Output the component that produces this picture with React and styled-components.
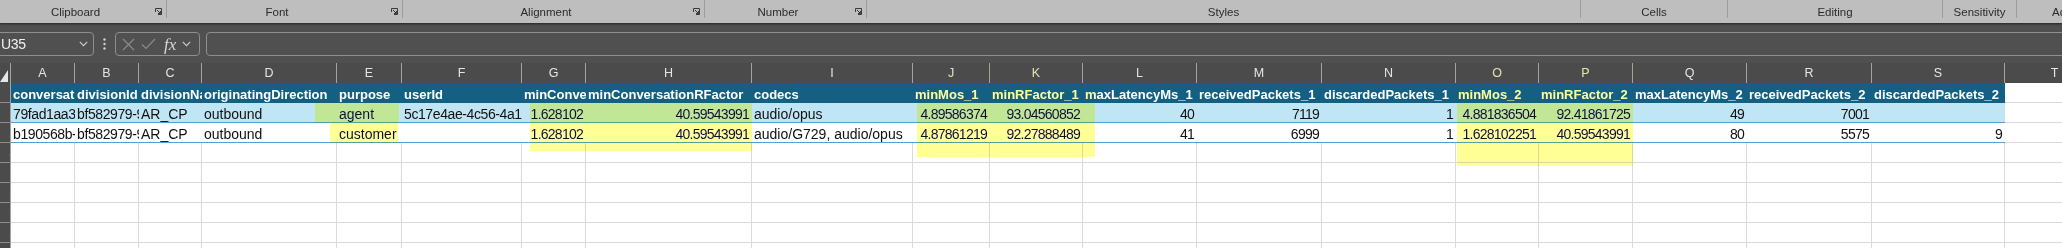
import React from 'react';
import styled, { createGlobalStyle } from 'styled-components';

const GlobalStyle = createGlobalStyle`
  html, body { margin: 0; padding: 0; background: #ffffff; overflow: hidden; }
  body { font-family: "Liberation Sans", Arial, sans-serif; }
  #root { width: 2062px; height: 248px; overflow: hidden; }
`;

const COLS = [11, 64, 64, 63, 135, 65, 120, 64, 166, 161, 77, 93, 114, 125, 134, 83, 94, 114, 125, 133, 100];
const TEMPLATE = COLS.map((c) => `${c}px`).join(' ');
const LETTERS = 'ABCDEFGHIJKLMNOPQRST'.split('');

const Page = styled.div`
  width: 2062px;
  height: 248px;
  overflow: hidden;
  background: #ffffff;
  display: flex;
  flex-direction: column;
`;

/* ---------- Ribbon group labels ---------- */
const Ribbon = styled.div`
  display: flex;
  height: 23px;
  flex: 0 0 23px;
  background: #bebebe;
  box-shadow: 0 1px 2px rgba(0, 0, 0, 0.55);
  position: relative;
  z-index: 1;
`;

const Group = styled.div`
  flex: 0 0 ${(p) => p.$w}px;
  display: flex;
  align-items: center;
  border-right: 1px solid #9c9c9c;
  box-sizing: border-box;
  height: 18px;
  margin-top: 0;
  padding-top: 5px;
`;

const GroupLabel = styled.span`
  flex: 1;
  text-align: center;
  font-size: 11.5px;
  color: #2b2b2b;
  white-space: nowrap;
  overflow: hidden;
  padding-left: ${(p) => p.$indent || 0}px;
`;

const Launcher = styled.svg`
  flex: 0 0 7px;
  width: 7px;
  height: 7px;
  margin: 0 4px 0 4px;
`;

const LauncherIcon = () => (
  <Launcher viewBox="0 0 7 7">
    <path d="M0.5 4 V0.5 H6.5 V6.5 H3" fill="none" stroke="#3a3a3a" strokeWidth="1" />
    <path d="M2 2 L5.5 5.5 M5.5 3 V5.5 H3" fill="none" stroke="#3a3a3a" strokeWidth="1" />
  </Launcher>
);

/* ---------- Formula bar ---------- */
const FormulaBar = styled.div`
  flex: 0 0 40px;
  height: 40px;
  background: #505050;
  display: flex;
  align-items: flex-start;
  padding-top: 9px;
  box-sizing: border-box;
`;

const BoxBase = styled.div`
  height: 24px;
  box-sizing: border-box;
  border: 1px solid #8e8e8e;
  border-radius: 4px;
  display: flex;
  align-items: center;
`;

const NameBox = styled(BoxBase)`
  width: 100px;
  margin-left: -6px;
  padding: 0 5px 0 6px;
  justify-content: space-between;
  color: #f0f0f0;
  font-size: 14px;
  letter-spacing: -0.3px;
`;

const Dots = styled.div`
  width: 21px;
  height: 24px;
  display: flex;
  align-items: center;
  justify-content: center;
`;

const FxBox = styled(BoxBase)`
  width: 85px;
  padding: 0 3px 0 6px;
  gap: 6px;
`;

const FxText = styled.span`
  font-family: "Liberation Serif", "Times New Roman", serif;
  font-style: italic;
  font-size: 17px;
  color: #d8d8d8;
  margin-left: 2px;
  line-height: 1;
`;

const FormulaInput = styled(BoxBase)`
  flex: 1;
  margin-left: 6px;
  margin-right: -10px;
`;

const Chevron = ({ color = '#cfcfcf' }) => (
  <svg width="9" height="6" viewBox="0 0 9 6">
    <path d="M0.8 0.8 L4.5 4.6 L8.2 0.8" fill="none" stroke={color} strokeWidth="1.1" />
  </svg>
);

/* ---------- Sheet ---------- */
const Sheet = styled.div`
  position: relative;
  flex: 1;
  overflow: hidden;
`;

const Row = styled.div`
  display: grid;
  grid-template-columns: ${TEMPLATE};
  height: 20px;
`;

const ColHead = styled.div`
  background: #4b4b4b;
  border-right: 1px solid #a3a3a3;
  border-bottom: 1px solid #a8a8a8;
  box-sizing: border-box;
  color: #e4e4e4;
  font-size: 12.5px;
  line-height: 21px;
  text-align: center;
`;

const Corner = styled.div`
  background: #4b4b4b;
  border-right: 1px solid #a3a3a3;
  border-bottom: 1px solid #a8a8a8;
  box-sizing: border-box;
  display: flex;
  align-items: flex-end;
  padding: 0 0 2px 0;
`;

const RowHead = styled.div`
  background: #4b4b4b;
  border-right: 1px solid #a3a3a3;
  border-bottom: 1px solid #8c8c8c;
  box-sizing: border-box;
  overflow: hidden;
  display: flex;
  justify-content: flex-end;
  color: #e07050;
  font-size: 12px;
  line-height: 22px;
`;

const RowNum = styled.span`
  margin-right: -6px;
`;

const Cell = styled.div`
  box-sizing: border-box;
  overflow: hidden;
  white-space: nowrap;
  font-size: 14px;
  line-height: 23px;
  color: #111111;
  padding: 0 3px 0 2px;
  text-align: ${(p) => (p.$num ? 'right' : 'left')};
  letter-spacing: ${(p) => (p.$num ? '-0.75px' : p.$id ? '-0.4px' : '0')};
  background: ${(p) =>
    p.$variant === 'head' ? '#156082' : p.$variant === 'band' ? '#c0e6f5' : '#ffffff'};
  border-bottom: 1px solid
    ${(p) => (p.$variant === 'band' || p.$variant === 'plain' ? '#4ea3d3' : p.$variant === 'head' ? '#156082' : '#dadada')};
  border-right: ${(p) => (p.$variant === 'empty' ? '1px solid #dadada' : '0')};
`;

const HeadCell = styled(Cell)`
  color: #ffffff;
  font-weight: bold;
  font-size: 13px;
`;

const Highlight = styled.div`
  position: absolute;
  background: #ffff96;
  mix-blend-mode: darken;
  pointer-events: none;
`;

const HEADERS = [
  'conversationId', 'divisionId', 'divisionName', 'originatingDirection', 'purpose', 'userId',
  'minConversationMos', 'minConversationRFactor', 'codecs', 'minMos_1', 'minRFactor_1',
  'maxLatencyMs_1', 'receivedPackets_1', 'discardedPackets_1', 'minMos_2', 'minRFactor_2',
  'maxLatencyMs_2', 'receivedPackets_2', 'discardedPackets_2',
];

const ROWS = [
  [
    '79fad1aa3e0c-4b7a-9c1d-2e5f6a7b8c9d', 'bf582979-9b1c-4d2e-8f3a-5c6d7e8f9a0b', 'AR_CP', 'outbound',
    'agent', '5c17e4ae-4c56-4a1e-9b2f-0d3c4e5f6a7b', 1.628102, '40.59543991', 'audio/opus',
    '4.89586374', '93.04560852', 40, 7119, 1, '4.881836504', '92.41861725', 49, 7001, '',
  ],
  [
    'b190568b-2c3d-4e5f-a6b7-c8d9e0f1a2b3', 'bf582979-9b1c-4d2e-8f3a-5c6d7e8f9a0b', 'AR_CP', 'outbound',
    'customer', '', 1.628102, '40.59543991', 'audio/G729, audio/opus',
    '4.87861219', '92.27888489', 41, 6999, 1, '1.628102251', '40.59543991', 80, 5575, 9,
  ],
];

const NUMERIC = new Set([6, 7, 9, 10, 11, 12, 13, 14, 15, 16, 17, 18]);
const ID_COLS = new Set([0, 1, 5]);

const GROUPS = [
  { name: 'Clipboard', w: 167, launcher: true },
  { name: 'Font', w: 236, launcher: true },
  { name: 'Alignment', w: 302, launcher: true },
  { name: 'Number', w: 162, launcher: true },
  { name: 'Styles', w: 714 },
  { name: 'Cells', w: 147 },
  { name: 'Editing', w: 215 },
  { name: 'Sensitivity', w: 74 },
  { name: 'Add-ins', w: 110 },
];

const HIGHLIGHTS = [
  { left: 315, top: 40, width: 84, height: 20 },
  { left: 330, top: 60, width: 68, height: 20 },
  { left: 530, top: 40, width: 222, height: 48 },
  { left: 917, top: 0, width: 178, height: 94 },
  { left: 1457, top: 0, width: 176, height: 103 },
];

export default function App() {
  return (
    <Page>
      <GlobalStyle />
      <Ribbon>
        {GROUPS.map((g) => (
          <Group key={g.name} $w={g.w}>
            <GroupLabel $indent={g.launcher ? 0 : 0}>{g.name}</GroupLabel>
            {g.launcher && <LauncherIcon />}
          </Group>
        ))}
      </Ribbon>

      <FormulaBar>
        <NameBox>
          <span>U35</span>
          <Chevron />
        </NameBox>
        <Dots>
          <svg width="3" height="12" viewBox="0 0 3 12">
            <circle cx="1.5" cy="1.5" r="1.2" fill="#d0d0d0" />
            <circle cx="1.5" cy="6" r="1.2" fill="#d0d0d0" />
            <circle cx="1.5" cy="10.5" r="1.2" fill="#d0d0d0" />
          </svg>
        </Dots>
        <FxBox>
          <svg width="13" height="13" viewBox="0 0 13 13">
            <path d="M1 1 L12 12 M12 1 L1 12" stroke="#8a8a8a" strokeWidth="1.2" fill="none" />
          </svg>
          <svg width="15" height="12" viewBox="0 0 15 12">
            <path d="M1 6.5 L5 10.5 L14 1" stroke="#8a8a8a" strokeWidth="1.2" fill="none" />
          </svg>
          <FxText>fx</FxText>
          <Chevron />
        </FxBox>
        <FormulaInput />
      </FormulaBar>

      <Sheet>
        <Row>
          <Corner>
            <svg width="8" height="12" viewBox="0 0 8 12">
              <path d="M8 0 L8 12 L0 12 Z" fill="#e6e6e6" />
            </svg>
          </Corner>
          {LETTERS.map((l) => (
            <ColHead key={l}>{l}</ColHead>
          ))}
        </Row>

        <Row>
          <RowHead>
            <RowNum>1</RowNum>
          </RowHead>
          {HEADERS.map((h) => (
            <HeadCell key={h} $variant="head">
              {h}
            </HeadCell>
          ))}
          <Cell $variant="empty" />
        </Row>

        {ROWS.map((r, ri) => (
          <Row key={ri}>
            <RowHead>
              <RowNum>{ri + 2}</RowNum>
            </RowHead>
            {r.map((v, ci) => (
              <Cell
                key={ci}
                $variant={ri === 0 ? 'band' : 'plain'}
                $num={NUMERIC.has(ci)}
                $id={ID_COLS.has(ci)}
              >
                {v}
              </Cell>
            ))}
            <Cell $variant="empty" />
          </Row>
        ))}

        {[4, 5, 6, 7, 8, 9].map((n) => (
          <Row key={n}>
            <RowHead>
              <RowNum>{n}</RowNum>
            </RowHead>
            {LETTERS.map((l) => (
              <Cell key={l} $variant="empty" />
            ))}
          </Row>
        ))}

        {HIGHLIGHTS.map((h, i) => (
          <Highlight
            key={i}
            style={{ left: h.left, top: h.top, width: h.width, height: h.height }}
          />
        ))}
      </Sheet>
    </Page>
  );
}
